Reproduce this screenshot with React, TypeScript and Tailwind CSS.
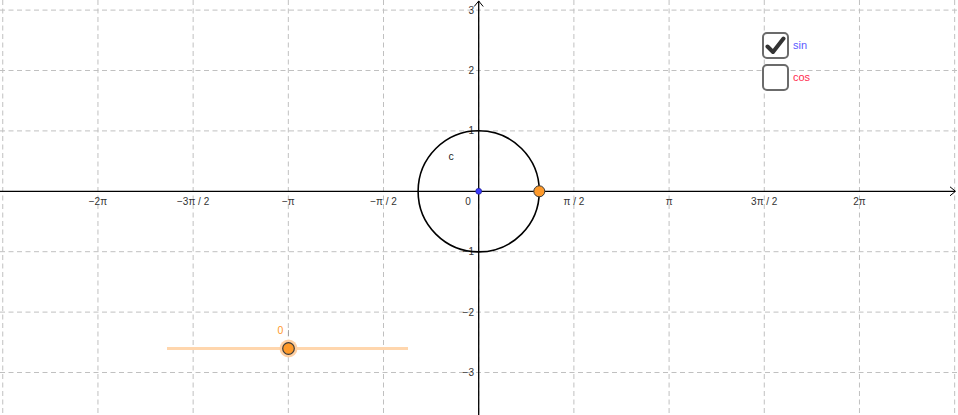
import { useState } from 'react'

const W = 958
const H = 415
const OX = 478.7
const OY = 191.3
const UX = 60.6
const UY = 60.4

const xLabels = [
    { k: -4, t: '−2π' },
    { k: -3, t: '−3π / 2' },
    { k: -2, t: '−π' },
    { k: -1, t: '−π / 2' },
    { k: 1, t: 'π / 2' },
    { k: 2, t: 'π' },
    { k: 3, t: '3π / 2' },
    { k: 4, t: '2π' },
]

const yLabels = [3, 2, 1, -1, -2, -3]

function Checkbox({ checked, onToggle, label, color }: { checked: boolean; onToggle: () => void; label: string; color: string }) {
    return (
        <button onClick={onToggle} className="flex items-center gap-[4px] cursor-pointer">
            <span className="w-[27px] h-[27px] rounded-[5px] border-2 border-[#6b6b6b] bg-white flex items-center justify-center">
                {checked && (
                    <svg width="21" height="19" viewBox="0 0 21 19">
                        <path d="M2.5 10.5 L8 16 L18.5 2.5" fill="none" stroke="#333" strokeWidth="4" strokeLinecap="round" strokeLinejoin="round" />
                    </svg>
                )}
            </span>
            <span className={`text-[11px] leading-none font-['Liberation_Sans',Arial,sans-serif] ${color}`}>{label}</span>
        </button>
    )
}

export default function App() {
    const [sin, setSin] = useState(true)
    const [cos, setCos] = useState(false)

    const vLines = Array.from({ length: 11 }, (_, i) => OX + (i - 5) * UX * Math.PI / 2)
    const hLines = [3, 2, 1, -1, -2, -3].map(k => OY - k * UY)

    return (
        <div className="relative w-[958px] h-[415px] bg-white overflow-hidden font-['Liberation_Sans',Arial,sans-serif]">
            <svg width={W} height={H} className="absolute inset-0">
                {/* grille */}
                {vLines.map((x, i) => (
                    <line key={'v' + i} x1={x} y1={0} x2={x} y2={H} stroke="#c0c0c0" strokeWidth="1" strokeDasharray="5 3.5" />
                ))}
                {hLines.map((y, i) => (
                    <line key={'h' + i} x1={0} y1={y} x2={W} y2={y} stroke="#c0c0c0" strokeWidth="1" strokeDasharray="5 3.5" />
                ))}

                {/* axes */}
                <line x1={0} y1={OY} x2={955} y2={OY} stroke="#000" strokeWidth="1.3" />
                <path d={`M950 ${OY - 4.5} L955.5 ${OY} L950 ${OY + 4.5}`} fill="none" stroke="#000" strokeWidth="1" />
                <line x1={OX} y1={1} x2={OX} y2={H} stroke="#000" strokeWidth="1.3" />
                <path d={`M${OX - 4.5} 6.5 L${OX} 1 L${OX + 4.5} 6.5`} fill="none" stroke="#000" strokeWidth="1" />

                {xLabels.map(l => (
                    <text key={l.k} x={OX + l.k * UX * Math.PI / 2} y={205} fontSize="10" textAnchor="middle" fill="#333">{l.t}</text>
                ))}
                <text x={468} y={205} fontSize="10" textAnchor="middle" fill="#333">0</text>
                {yLabels.map(k => (
                    <text key={k} x={474} y={OY - k * UY + 3.5} fontSize="10" textAnchor="end" fill="#333">{k < 0 ? '−' + -k : k}</text>
                ))}

                {/* cercle */}
                <circle cx={OX} cy={OY} r={UX} fill="none" stroke="#000" strokeWidth="1.6" />
                <text x={451} y={160} fontSize="10.5" textAnchor="middle" fill="#222">c</text>
                <circle cx={OX} cy={OY} r={3} fill="#3c3cff" stroke="#1a1a80" strokeWidth="0.6" />
                <circle cx={539.3} cy={OY} r={5.5} fill="#ff9a2a" stroke="#3a3a3a" strokeWidth="1" />

                {/* curseur */}
                <line x1={167} y1={348.5} x2={408} y2={348.5} stroke="#ffd6ad" strokeWidth="3" />
                <line x1={288.5} y1={330} x2={288.5} y2={336} stroke="#999" strokeWidth="0.8" />
                <text x={280.5} y={334} fontSize="10.5" textAnchor="middle" fill="#ff9a2a">0</text>
                <circle cx={288.5} cy={348.5} r={9} fill="#ffd0a3" />
                <circle cx={288.5} cy={348.5} r={5.8} fill="#ff9a2a" stroke="#3a3a3a" strokeWidth="1.2" />
            </svg>

            {/* cases à cocher */}
            <div className="absolute left-[762px] top-[32px] flex flex-col gap-[5px]">
                <Checkbox checked={sin} onToggle={() => setSin(!sin)} label="sin" color="text-[#5c5cff]" />
                <Checkbox checked={cos} onToggle={() => setCos(!cos)} label="cos" color="text-[#ff2a4f]" />
            </div>
        </div>
    )
}
